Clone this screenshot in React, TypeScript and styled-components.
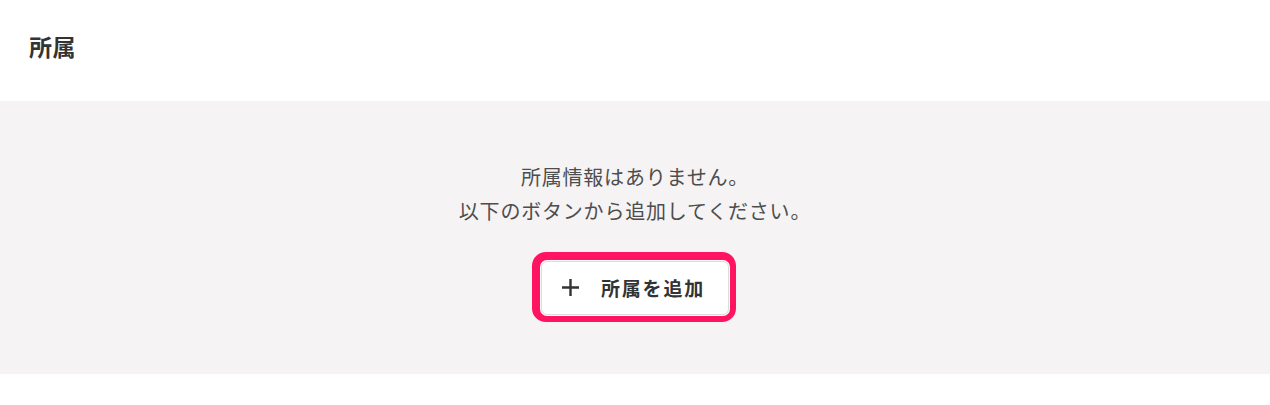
import React from "react";
import styled, { createGlobalStyle } from "styled-components";

const GlobalStyle = createGlobalStyle`
  html, body { margin: 0; padding: 0; background: #ffffff; }
  body {
    font-family: "Noto Sans CJK JP", "Noto Sans", sans-serif;
    -webkit-font-smoothing: antialiased;
  }
`;

const Page = styled.div`
  width: 1270px;
  background: #ffffff;
`;

const Header = styled.header`
  height: 101px;
  box-sizing: border-box;
  padding: 28px 29px 0;
`;

const Title = styled.h2`
  margin: 0;
  font-size: 23px;
  line-height: 36px;
  font-weight: 700;
  color: #333333;
  letter-spacing: 0.5px;
`;

const EmptyPanel = styled.section`
  background: #f5f3f4;
  height: 273px;
  box-sizing: border-box;
  padding-top: 59px;
  display: flex;
  flex-direction: column;
  align-items: center;
`;

const Message = styled.p`
  margin: 0;
  font-size: 20px;
  line-height: 34px;
  color: #4d4d4d;
  text-align: center;
  letter-spacing: 0.8px;
`;

const AddButton = styled.button`
  margin-top: 33px;
  width: 188px;
  height: 54px;
  box-sizing: border-box;
  display: flex;
  align-items: center;
  justify-content: center;
  gap: 21px;
  background: #ffffff;
  border: 1px solid #dcdcdc;
  border-radius: 6px;
  box-shadow: 0 0 0 1px #ffffff, -1px -1px 0 8px #ff1461;
  font-family: "Noto Sans CJK JP", "Noto Sans", sans-serif;
  font-size: 19px;
  font-weight: 700;
  color: #333333;
  letter-spacing: 1.8px;
  cursor: pointer;
  padding: 0 4px 2px 0;
`;

const PlusIcon = () => (
  <svg width="19" height="19" viewBox="0 0 19 19" aria-hidden="true">
    <path d="M9.5 1v17M1 9.5h17" stroke="#333333" strokeWidth="2.4" fill="none" />
  </svg>
);

export default function App() {
  return (
    <Page>
      <GlobalStyle />
      <Header>
        <Title>所属</Title>
      </Header>
      <EmptyPanel>
        <Message>
          所属情報はありません。
          <br />
          以下のボタンから追加してください。
        </Message>
        <AddButton type="button">
          <PlusIcon />
          <span>所属を追加</span>
        </AddButton>
      </EmptyPanel>
    </Page>
  );
}
